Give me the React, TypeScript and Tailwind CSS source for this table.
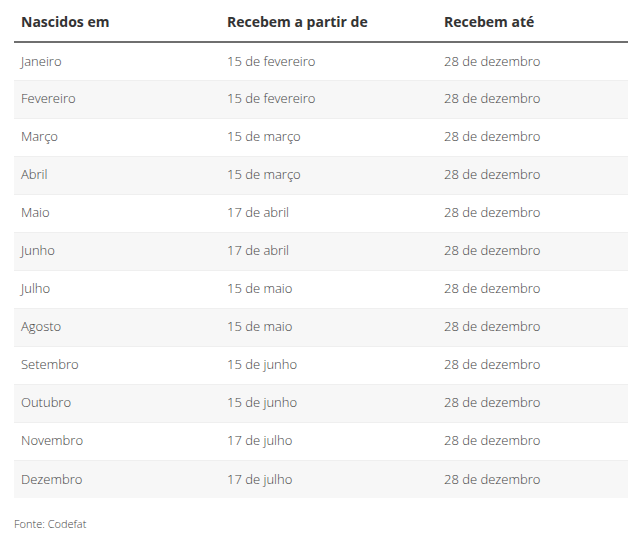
const rows: [string, string, string][] = [
  ['Janeiro', '15 de fevereiro', '28 de dezembro'],
  ['Fevereiro', '15 de fevereiro', '28 de dezembro'],
  ['Março', '15 de março', '28 de dezembro'],
  ['Abril', '15 de março', '28 de dezembro'],
  ['Maio', '17 de abril', '28 de dezembro'],
  ['Junho', '17 de abril', '28 de dezembro'],
  ['Julho', '15 de maio', '28 de dezembro'],
  ['Agosto', '15 de maio', '28 de dezembro'],
  ['Setembro', '15 de junho', '28 de dezembro'],
  ['Outubro', '15 de junho', '28 de dezembro'],
  ['Novembro', '17 de julho', '28 de dezembro'],
  ['Dezembro', '17 de julho', '28 de dezembro'],
]

export default function App() {
  return (
    <div className="min-h-[540px] w-[637px] bg-white px-[14px]" style={{ fontFamily: '"Open Sans", sans-serif' }}>
      <table className="w-[614px] border-collapse">
        <thead>
          <tr className="h-[42px] border-b-2 border-[#6f6f6f] text-left text-[14px] font-bold text-[#333]">
            <th className="w-[206px] pl-[7px] pt-[2px]">Nascidos em</th>
            <th className="w-[217px] pl-[7px] pt-[2px]">Recebem a partir de</th>
            <th className="pl-[7px] pt-[2px]">Recebem até</th>
          </tr>
        </thead>
        <tbody>
          {rows.map((r, i) => (
            <tr
              key={r[0]}
              className={
                'h-[38px] border-t border-[#efefef] text-[13px] font-light text-[#444] ' +
                (i % 2 === 1 ? 'bg-[#f7f7f7]' : 'bg-white')
              }
            >
              <td className="pl-[7px]">{r[0]}</td>
              <td className="pl-[7px]">{r[1]}</td>
              <td className="pl-[7px]">{r[2]}</td>
            </tr>
          ))}
        </tbody>
      </table>
      <p className="mt-[18px] text-[11px] font-light text-[#444]">Fonte: Codefat</p>
    </div>
  )
}
